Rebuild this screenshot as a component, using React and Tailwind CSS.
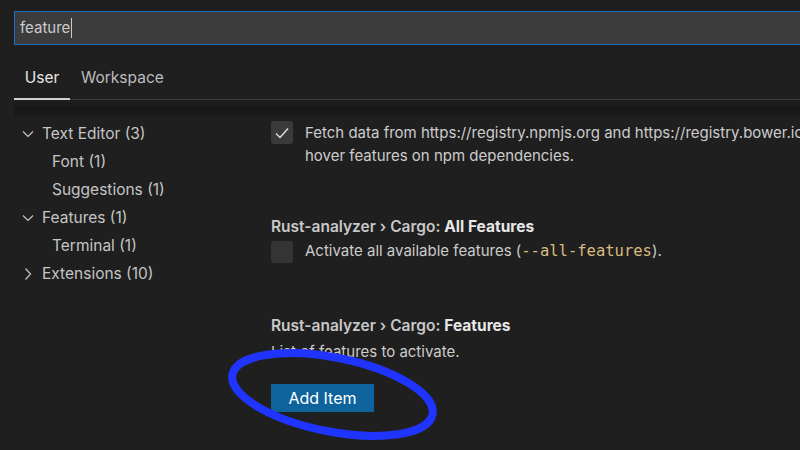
import React from "react";

const Down = () => (
  <svg width="12" height="12" viewBox="0 0 12 12" className="shrink-0">
    <path d="M1 3.5 L6 8.5 L11 3.5" fill="none" stroke="#c5c5c5" strokeWidth="1.2" />
  </svg>
);
const Right = () => (
  <svg width="12" height="12" viewBox="0 0 12 12" className="shrink-0">
    <path d="M3.5 0.5 L8.5 6 L3.5 11.5" fill="none" stroke="#c5c5c5" strokeWidth="1.2" />
  </svg>
);

function TreeRow({ icon, indent, children }) {
  return (
    <div className={`flex items-center h-[28px] ${indent ? "pl-[38px]" : "pl-[8px]"}`}>
      {icon && <span className="w-[20px] flex items-center">{icon}</span>}
      <span>{children}</span>
    </div>
  );
}

export default function App() {
  return (
    <div
      className="relative w-[800px] h-[450px] overflow-hidden bg-[#1f1f1f] text-[#cccccc] text-[15px]"
      style={{ fontFamily: "Inter, 'Noto Sans', sans-serif" }}
    >
      {/* search */}
      <div className="pt-[11px] pl-[14px]">
        <div className="h-[34px] bg-[#3c3c3c] border-y border-l border-[#1f6fc0] flex items-center pl-[5px] text-[15px] text-[#cccccc]">
          feature<span className="inline-block w-px h-[20px] bg-[#cccccc] ml-px"></span>
        </div>
      </div>
      {/* tabs */}
      <div className="ml-[14px] h-[55px] flex items-end border-b border-[#3a3a3a] text-[15.5px]">
        <div className="w-[56px] h-full flex items-center justify-center pt-[11px] border-b-2 border-[#d0d0d0] -mb-px text-[#e7e7e7]">
          User
        </div>
        <div className="h-full flex items-center pl-[11px] pt-[11px] text-[#bdbdbd]">Workspace</div>
      </div>
      {/* shadow */}
      <div className="ml-[14px] h-[19px] bg-gradient-to-b from-[#1f1f1f] via-[#161616] to-[#1f1f1f]"></div>
      {/* body */}
      <div className="flex">
        <div className="w-[257px] ml-[14px] text-[#c5c5c5] text-[15.5px] pt-[1px]">
          <TreeRow icon={<Down />}>Text Editor (3)</TreeRow>
          <TreeRow indent>Font (1)</TreeRow>
          <TreeRow indent>Suggestions (1)</TreeRow>
          <TreeRow icon={<Down />}>Features (1)</TreeRow>
          <TreeRow indent>Terminal (1)</TreeRow>
          <TreeRow icon={<Right />}>Extensions (10)</TreeRow>
        </div>
        <div className="flex-1 min-w-0 -mt-[6px] whitespace-nowrap">
          {/* item 1 */}
          <div className="flex items-start">
            <div className="w-[22px] h-[23px] mt-[8px] rounded-[3px] bg-[#3a3a3a] flex items-center justify-center shrink-0">
              <svg width="16" height="16" viewBox="0 0 16 16">
                <path d="M2 8.5 L6 12.5 L14 3.5" fill="none" stroke="#e0e0e0" strokeWidth="1.4" />
              </svg>
            </div>
            <div className="ml-[12px] leading-[23px] pt-[8px]">
              <div>Fetch data from https://registry.npmjs.org and https://registry.bower.io to provide</div>
              <div>hover features on npm dependencies.</div>
            </div>
          </div>
          {/* item 2 */}
          <div className="mt-[48px] leading-[23px] font-semibold text-[#c8c8c8] text-[15.5px]">
            Rust-analyzer › Cargo: <span className="text-[#e7e7e7] font-bold">All Features</span>
          </div>
          <div className="flex items-center mt-[2px]">
            <div className="w-[22px] h-[22px] rounded-[3px] bg-[#343434] shrink-0"></div>
            <div className="ml-[12px]">
              Activate all available features (
              <span className="text-[#d7ba7d]" style={{ fontFamily: "'DejaVu Sans Mono', monospace", fontSize: "15.5px" }}>
                --all-features
              </span>
              ).
            </div>
          </div>
          {/* item 3 */}
          <div className="mt-[51px] leading-[23px] font-semibold text-[#c8c8c8] text-[15.5px]">
            Rust-analyzer › Cargo: <span className="text-[#e7e7e7] font-bold">Features</span>
          </div>
          <div className="mt-[3px] leading-[23px]">List of features to activate.</div>
          <button className="mt-[21px] w-[103px] h-[28px] bg-[#0e639c] text-white text-[16px] flex items-center justify-center">
            Add Item
          </button>
        </div>
      </div>
      {/* annotation ellipse */}
      <svg className="absolute left-0 top-0 pointer-events-none" width="800" height="450">
        <ellipse
          cx="332.5"
          cy="394.5"
          rx="102"
          ry="37"
          transform="rotate(11.25 332.5 394.5)"
          fill="none"
          stroke="#1f35ff"
          strokeWidth="8"
        />
      </svg>
    </div>
  );
}
